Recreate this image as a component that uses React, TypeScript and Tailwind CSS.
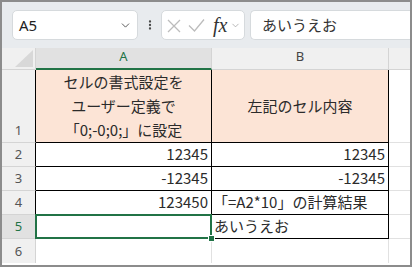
import { ChevronDown, EllipsisVertical } from 'lucide-react';
import type { ReactNode } from 'react';

const GREEN = '#217346';

type RowData = {
  n: number;
  a: ReactNode;
  b: ReactNode;
  aAlign: string;
  bAlign: string;
};

const ROWS: RowData[] = [
  {
    n: 1,
    a: (
      <div className="flex flex-col items-center leading-[24px]">
        <span>セルの書式設定を</span>
        <span>ユーザー定義で</span>
        <span>「0;-0;0;」に設定</span>
      </div>
    ),
    b: '左記のセル内容',
    aAlign: 'justify-center',
    bAlign: 'justify-center',
  },
  { n: 2, a: '12345', b: '12345', aAlign: 'justify-end pr-[3px]', bAlign: 'justify-end pr-[3px]' },
  { n: 3, a: '-12345', b: '-12345', aAlign: 'justify-end pr-[3px]', bAlign: 'justify-end pr-[3px]' },
  { n: 4, a: '123450', b: '「=A2*10」の計算結果', aAlign: 'justify-end pr-[3px]', bAlign: 'justify-start pl-[1px]' },
  { n: 5, a: '', b: 'あいうえお', aAlign: 'justify-end pr-[3px]', bAlign: 'justify-start pl-[2px]' },
];

function Toolbar() {
  return (
    <div className="flex h-[46px] shrink-0 items-center bg-[#e8ebee] pl-[10px]">
      {/* name box */}
      <div className="flex h-[30px] w-[126px] items-center justify-between rounded-[5px] border border-[#d6dadd] bg-white pl-[6px] pr-[5px]">
        <span className="text-[15px] text-[#222]">A5</span>
        <ChevronDown size={13} strokeWidth={1.6} className="text-[#444]" />
      </div>

      <div className="ml-[6px] flex w-[12px] justify-center">
        <EllipsisVertical size={14} strokeWidth={2.6} className="text-[#444]" />
      </div>

      {/* cancel / enter / fx */}
      <div className="ml-[5px] flex h-[30px] w-[84px] items-center rounded-[5px] border border-[#d6dadd] bg-white pl-[5px]">
        <svg width="14" height="14" viewBox="0 0 14 14" className="mt-[1px]">
          <path d="M1 1L13 13M13 1L1 13" stroke="#bcbcbc" strokeWidth="1.3" fill="none" />
        </svg>
        <svg width="17" height="14" viewBox="0 0 17 14" className="ml-[7px]">
          <path d="M1 7.5L6.5 13L16 1.5" stroke="#bcbcbc" strokeWidth="1.3" fill="none" />
        </svg>
        <span className="ml-[8px] font-['Liberation_Serif'] text-[20px] italic leading-none text-[#333]">
          fx
        </span>
        <ChevronDown size={11} strokeWidth={1.5} className="ml-[3px] text-[#999]" />
      </div>

      {/* formula input */}
      <div className="ml-[5px] flex h-[30px] flex-1 items-center rounded-l-[5px] border border-r-0 border-[#d6dadd] bg-white pl-[11px]">
        <span className="font-['Noto_Sans_CJK_JP'] text-[15px] text-[#333]">あいうえお</span>
      </div>
    </div>
  );
}

function Sheet() {
  return (
    <div className="grid flex-1 grid-cols-[34px_176px_177px_1fr] grid-rows-[22px_73px_24px_24px_24px_24px_24px] font-['Noto_Sans_CJK_JP',sans-serif] text-[15px] text-[#2b2b2b]">
      {/* column headers */}
      <div className="relative border-r border-b border-[#d4d4d4] bg-[#f0f0f0]">
        <svg width="34" height="22" viewBox="0 0 34 22" className="absolute inset-0">
          <polygon points="31,2 31,19 13,19" fill="#d8d8d8" />
        </svg>
      </div>
      <div className="flex items-center justify-center border-r border-[#d4d4d4] border-b-2 border-b-[#217346] bg-[#e1e1e1] pb-[3px] font-['Noto_Sans'] text-[13px] text-[#217346]">
        A
      </div>
      <div className="flex items-center justify-center border-r border-b border-[#d4d4d4] bg-[#f0f0f0] pb-[3px] font-['Noto_Sans'] text-[13px] text-[#444]">
        B
      </div>
      <div className="border-b border-[#d4d4d4] bg-[#f0f0f0]" />

      {ROWS.map((r) => {
        const selected = r.n === 5;
        return (
          <div key={r.n} className="contents">
            <div
              className={
                'flex items-end justify-center border-r border-b border-r-black border-b-[#d4d4d4] pb-[2px] font-["Noto_Sans"] text-[13px] leading-[20px] ' +
                (selected ? 'bg-[#e1e1e1] text-[#217346]' : 'bg-[#f0f0f0] text-[#555]')
              }
            >
              {r.n}
            </div>
            <div
              className={
                'relative flex items-center border-r border-b border-black ' +
                r.aAlign +
                (r.n === 1 ? ' bg-[#fce4d6]' : ' bg-white')
              }
            >
              {r.a}
              {selected && (
                <>
                  <div className="pointer-events-none absolute -top-[1px] -left-[1px] -right-[1px] -bottom-[1px] border-2" style={{ borderColor: GREEN }} />
                  <div className="absolute -right-[4px] -bottom-[4px] h-[7px] w-[7px] border border-white bg-[#217346]" />
                </>
              )}
            </div>
            <div
              className={
                'flex items-center whitespace-nowrap border-r border-b border-black ' +
                r.bAlign +
                (r.n === 1 ? ' bg-[#fce4d6]' : ' bg-white')
              }
            >
              {r.b}
            </div>
            <div className="border-b border-[#e1e1e1] bg-white" />
          </div>
        );
      })}

      {/* row 6 */}
      <div className="flex items-end justify-center border-r border-[#d4d4d4] bg-[#f0f0f0] pb-[2px] font-['Noto_Sans'] text-[13px] leading-[20px] text-[#555]">
        6
      </div>
      <div className="border-r border-[#e1e1e1] bg-white" />
      <div className="border-r border-[#e1e1e1] bg-white" />
      <div className="bg-white" />
    </div>
  );
}

export default function App() {
  return (
    <div className="flex h-[267px] w-[412px] flex-col overflow-hidden border-2 border-[#8c8c8c] bg-white font-['Noto_Sans',sans-serif]">
      <Toolbar />
      <Sheet />
    </div>
  );
}
